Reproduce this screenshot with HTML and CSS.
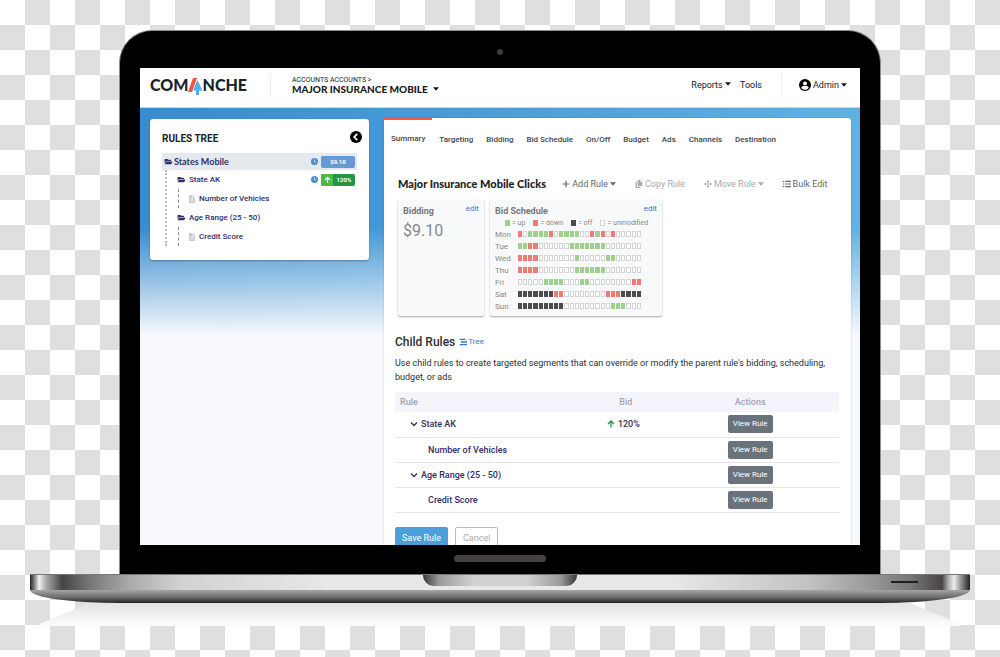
FILE: index.html
```html
<!DOCTYPE html>
<html lang="en">
<head>
<meta charset="utf-8">
<title>Comanche</title>
<link rel="stylesheet" href="styles.css">
</head>
<body>
<svg class="defs" width="0" height="0" aria-hidden="true">
  <symbol id="folder" viewBox="0 0 576 512"><path d="M572 294 500 417c-14 25-41 39-69 39H45c-18 0-30-20-20-36l71-124c14-24 41-40 70-40h385c19 0 31 21 21 38zM152 224h328v-48c0-26-22-48-48-48H272l-64-64H48C22 64 0 86 0 112v278l69-118c17-30 49-48 83-48z"/></symbol>
  <symbol id="file" viewBox="0 0 384 512"><path fill-rule="evenodd" d="M224 0H24C11 0 0 11 0 24v464c0 13 11 24 24 24h336c13 0 24-11 24-24V160H224zM90 230h204v32H90zm0 70h204v32H90zm0 70h204v32H90zM256 0v128h128z"/></symbol>
  <symbol id="clock" viewBox="0 0 16 16"><circle cx="8" cy="8" r="8"/><path d="M8 3.5V8.5l3 1.5" fill="none" stroke="#fff" stroke-width="1.8"/></symbol>
  <symbol id="up" viewBox="0 0 16 16"><path d="M8 15V2.500M2 8l6-6 6 6" fill="none" stroke="currentColor" stroke-width="2.6"/></symbol>
  <symbol id="chev" viewBox="0 0 16 16"><path d="M2 5l6 6 6-6" fill="none" stroke="currentColor" stroke-width="2.6"/></symbol>
  <symbol id="caret" viewBox="0 0 10 6"><path d="M0 0h10L5 6z"/></symbol>
</svg>
<main class="stage">
  <div class="lid">
    <i class="camera"></i>
    <div class="screen">
      <header class="topbar">
        <div class="logo"><span>COM</span><svg viewBox="0 0 16 18"><path fill="#f0553f" d="M5 0h4L4 14H0z"/><path fill="#55aee6" d="M9.500 2 14.500 12.500H11V17H8v-4.500H5z"/></svg><span>NCHE</span></div>
        <div class="account">
          <a href="#" class="crumb">ACCOUNTS ACCOUNTS &gt;</a>
          <button class="picker">MAJOR INSURANCE MOBILE <svg class="caret"><use href="#caret"/></svg></button>
        </div>
        <nav class="topnav">
          <button>Reports <svg class="caret"><use href="#caret"/></svg></button>
          <a href="#">Tools</a>
        </nav>
        <button class="admin"><svg class="user" viewBox="0 0 24 24"><circle cx="12" cy="12" r="12"/><circle cx="12" cy="9" r="4" fill="#fff"/><path fill="#fff" d="M4.500 18c.5-4 4-4 7.500-4s7 0 7.500 4c-2 2.500-4.500 3.500-7.500 3.500S6.500 20.500 4.500 18z"/></svg>Admin <svg class="caret"><use href="#caret"/></svg></button>
      </header>
      <div class="content">
        <aside class="tree">
          <div class="tree-head"><h2>RULES TREE</h2>
            <button class="collapse" aria-label="Collapse"><svg viewBox="0 0 12 12"><circle cx="6" cy="6" r="6"/><path d="M7.300 2.800 4.200 6l3.100 3.200" fill="none" stroke="#fff" stroke-width="1.700"/></svg></button></div>
          <div class="node root"><svg class="folder"><use href="#folder"/></svg><a href="#">States Mobile</a><svg class="clock"><use href="#clock"/></svg><span class="badge">$9.10</span></div>
          <ul class="branch">
            <li><div class="node"><svg class="folder"><use href="#folder"/></svg><a href="#">State AK</a><svg class="clock"><use href="#clock"/></svg><span class="badge green"><b><svg><use href="#up"/></svg></b><em>120%</em></span></div>
              <ul class="leaf"><li class="node"><svg class="file"><use href="#file"/></svg><a href="#">Number of Vehicles</a></li></ul></li>
            <li><div class="node"><svg class="folder"><use href="#folder"/></svg><a href="#">Age Range (25 - 50)</a></div>
              <ul class="leaf"><li class="node"><svg class="file"><use href="#file"/></svg><a href="#">Credit Score</a></li></ul></li>
          </ul>
        </aside>
        <section class="panel">
          <nav class="tabs"><a href="#" class="active">Summary</a><a href="#">Targeting</a><a href="#">Bidding</a><a href="#">Bid Schedule</a><a href="#">On/Off</a><a href="#">Budget</a><a href="#">Ads</a><a href="#">Channels</a><a href="#">Destination</a></nav>
          <div class="toolbar">
            <h1>Major Insurance Mobile Clicks</h1>
            <button><svg class="tool" viewBox="0 0 12 12"><path d="M6 1v10M1 6h10" stroke="currentColor" stroke-width="1.800"/></svg>Add Rule <svg class="caret"><use href="#caret"/></svg></button>
            <button class="dim"><svg class="tool" viewBox="0 0 12 12"><path fill="currentColor" d="M4 0h4v3h3v6H4zM9 0l2 2H9zM1 3h2v7h5v2H1z"/></svg>Copy Rule</button>
            <button class="dim"><svg class="tool" viewBox="0 0 12 12"><path d="M6 1v10M1 6h10" stroke="currentColor" stroke-width="1.200"/><path fill="currentColor" d="M6 0l2.200 2.800H3.800zM6 12l2.200-2.800H3.800zM0 6l2.800-2.200v4.400zM12 6 9.200 3.800v4.400z"/></svg>Move Rule <svg class="caret"><use href="#caret"/></svg></button>
            <button><svg class="tool" viewBox="0 0 12 12"><path d="M0 2h2m1.500 0H12M0 6h2m1.500 0H12M0 10h2m1.500 0H12" stroke="currentColor" stroke-width="1.700"/></svg>Bulk Edit</button>
          </div>
          <div class="cards">
            <article class="card bidding"><header><h3>Bidding</h3><a href="#">edit</a></header><p>$9.10</p></article>
            <article class="card schedule"><header><h3>Bid Schedule</h3><a href="#">edit</a></header>
              <div class="legend"><span><i class="g"></i>= up</span><span><i class="r"></i>= down</span><span><i class="k"></i>= off</span><span><i></i>= unmodified</span></div>
              <div class="week" id="week"></div></article>
          </div>
          <div class="child-head"><h2>Child Rules</h2><a href="#"><svg viewBox="0 0 12 12"><path d="M1 2h9M3 6h9M1 10h11" stroke="currentColor" stroke-width="2"/></svg>Tree</a></div>
          <p class="intro">Use child rules to create targeted segments that can override or modify the parent rule's bidding, scheduling, budget, or ads</p>
          <table class="rules">
            <thead><tr><th class="rule">Rule</th><th class="bid">Bid</th><th class="act">Actions</th></tr></thead>
            <tbody>
              <tr><td class="rule parent"><svg><use href="#chev"/></svg>State AK</td><td class="bid"><svg><use href="#up"/></svg>120%</td><td class="act"><button>View Rule</button></td></tr>
              <tr><td class="rule child">Number of Vehicles</td><td></td><td class="act"><button>View Rule</button></td></tr>
              <tr><td class="rule parent"><svg><use href="#chev"/></svg>Age Range (25 - 50)</td><td></td><td class="act"><button>View Rule</button></td></tr>
              <tr><td class="rule child">Credit Score</td><td></td><td class="act"><button>View Rule</button></td></tr>
            </tbody>
          </table>
          <div class="actions"><button class="save">Save Rule</button><button class="cancel">Cancel</button></div>
        </section>
      </div>
    </div>
    <i class="chin"></i>
  </div>
  <div class="base"><i class="notch"></i><i class="slot"></i></div>
  <div class="underside"></div>
  <div class="shadow"></div>
</main>
<script src="script.js"></script>
</body>
</html>
```

FILE: styles.css
```css
* { box-sizing: border-box; margin: 0; padding: 0; }
body {
  font-family: Roboto, "Liberation Sans", sans-serif;
  font-size: 9px;
  color: #2b2e33;
  background: repeating-conic-gradient(#dfdfdf 0 25%, #fff 0 50%) 0 0 / 50px 50px;
}
.defs { position: absolute; }
a { color: inherit; text-decoration: none; }
button { font: inherit; color: inherit; background: none; border: 0; white-space: nowrap; }
ul { list-style: none; }
i, em { font-style: normal; }
svg { flex: none; display: block; }
.caret { display: inline-block; width: 6px; height: 4px; vertical-align: 2px; fill: currentColor; }

/* laptop */
.stage { height: 100vh; min-height: 400px; padding: 30px 3% 31px; display: flex; flex-direction: column; overflow: hidden; }
.lid {
  flex: 1; min-height: 0; margin: 0 89px; padding: 0 20px; display: flex; flex-direction: column; align-items: center;
  background: #000; border: 1px solid #8d8d8d; border-bottom: 0; border-radius: 33px 33px 0 0;
}
.camera { flex: none; width: 6px; height: 6px; margin: 18px 0 13px; border-radius: 50%; background: #3d3a3c; }
.chin { flex: none; width: 92px; height: 7px; margin: 10px 0 12px; border-radius: 4px; background: #454143; }
.screen { flex: 1; min-height: 0; width: 100%; overflow: hidden; display: flex; flex-direction: column; background: #f8f9fc; }
.base {
  flex: none; height: 16px; display: flex; justify-content: center; position: relative; border-top: 1px solid #777;
  background: linear-gradient(90deg, #222 0, #777 4px, #f2f2f2 9px, #aaa 16px, #474345 32px, #777 60px, #aaa 100px, #d0d2d2 150px, #e8e8e8 300px, #e8e8e8 calc(100% - 300px), #c2c2c2 calc(100% - 160px), #999 calc(100% - 100px), #777 calc(100% - 60px), #484446 calc(100% - 28px), #aaa calc(100% - 22px), #eee calc(100% - 16px), #777 calc(100% - 7px), #222 100%);
}
.notch { width: 154px; height: 11px; border-radius: 0 0 14px 14px; background: linear-gradient(90deg, #3a3a3a, #999 16px, #d0d2d2 50px, #d0d2d2 104px, #999 138px, #3a3a3a); }
.slot { position: absolute; right: 52px; top: 6px; width: 27px; height: 2px; background: #1d1f22; }
.underside { flex: none; height: 13px; background: linear-gradient(#a5a5a5, #666 60%, #231f20); border-radius: 0 0 90px 90px / 0 0 13px 13px; }
.shadow { flex: none; height: 23px; margin: 0 10px; background: linear-gradient(#e2e2e2, #fdfdfd); clip-path: polygon(50px 0, calc(100% - 50px) 0, 100% 90%, 100% 100%, 0 100%, 0 90%); }

/* top bar */
.topbar { flex: none; height: 40px; padding: 0 13px 0 10px; display: flex; align-items: center; background: #fff; border-bottom: 1px solid #c3d9ea; color: #17191c; }
.logo { display: flex; align-items: center; height: 24px; padding-right: 23px; margin-bottom: 5px; border-right: 1px solid #eee; font: 900 16px/20px Lato, sans-serif; color: #1a222b; }
.logo svg { width: 16px; height: 18px; margin: 3px -1px 0 -1px; }
.account { margin: 0 auto 5px 21px; display: flex; flex-direction: column; align-items: flex-start; }
.crumb { font-size: 7px; line-height: 8px; }
.picker { font: 900 10px/11px Lato, sans-serif; }
.picker .caret { margin-left: 3px; }
.topnav { display: flex; gap: 9px; padding-right: 19px; height: 24px; align-items: center; margin-bottom: 5px; border-right: 1px solid #eee; }
.admin { display: flex; align-items: center; gap: 2px; margin: 0 0 5px 17px; }
.user { width: 12px; height: 12px; }

.content {
  flex: 1; min-height: 0; display: flex; align-items: flex-start; gap: 15px; padding: 10px 9px 0 10px;
  background:
    linear-gradient(transparent 120px, #f8f9fc 228px) no-repeat,
    linear-gradient(90deg, #378ccf, #5db2e5) 0 0 / 100% 228px no-repeat;
}

/* rules tree */
.tree { flex: 0 0 219px; margin-top: 1px; padding: 12px 12px 14px; background: #fff; border-radius: 3px; box-shadow: 0 1px 2px rgba(0,0,0,.3); color: #302d6b; font-weight: 500; font-size: 8px; }
.tree-head { display: flex; justify-content: space-between; height: 22px; align-items: flex-start; margin-right: -5px; }
.tree-head h2 { font-size: 10px; line-height: 16px; font-weight: 700; color: #222; }
.collapse svg { width: 12px; height: 12px; }
.node { height: 19px; display: flex; align-items: center; }
.node a { flex: 1; }
.root { height: 17px; padding: 0 2px; background: #e4e9ee; font: 700 9px/17px Lato, sans-serif; }
.folder { width: 9px; height: 7px; margin-right: 1px; fill: #302d6b; }
.file { width: 6px; height: 8px; margin-right: 4px; fill: #ccc; }
.clock { width: 7px; height: 7px; margin-right: 3px; fill: #4a8ad0; }
.badge { width: 34px; height: 12px; display: flex; justify-content: center; overflow: hidden; border-radius: 2px; background: #6699d4; color: #fff; font: 700 6px/12px Roboto, sans-serif; }
.green { background: #23963f; }
.green b { width: 12px; display: grid; place-items: center; background: #4cb848; }
.green svg { width: 7px; height: 8px; }
.green em { flex: 1; text-align: center; }
.branch { margin: 2px 0 0 3px; border-left: 2px dotted #bbb; padding-left: 10px; }
.branch > li:first-child { margin-top: -2px; }
.branch .folder { margin-right: 3px; }
.branch > li > .node { padding-right: 2px; }
.leaf { margin-left: 1px; border-left: 1px dashed #888; padding-left: 10px; }

/* main panel */
.panel { flex: 1; min-width: 0; background: #fff; border-radius: 0 3px 0 0; padding-bottom: 20px; box-shadow: 0 0 2px rgba(0,0,0,.2); }
.tabs { display: flex; font-size: 8px; font-weight: 500; line-height: 10px; color: #444; }
.tabs a { padding: 15px 6px 0 7px; border-top: 2px solid transparent; }
.tabs a.active { border-color: #ef5b4c; padding: 14px 7px 0; }
.toolbar { display: flex; align-items: center; gap: 19px; margin: 33px 14px 10px; line-height: 12px; color: #666; }
.toolbar h1 { font: 900 11px/12px Lato, sans-serif; color: #222; margin-right: -3px; white-space: nowrap; }
.toolbar button { display: flex; align-items: center; gap: 2px; }
.toolbar .dim { color: #aaa; }
.tool { width: 8px; height: 8px; }
.cards { display: flex; gap: 6px; margin: 0 14px; height: 116px; }
.card { padding: 4px 5px; background: #f8f9fb; border-radius: 2px; box-shadow: 0 1px 2px rgba(0,0,0,.35); color: #888; }
.card header { display: flex; justify-content: space-between; }
.card h3 { font-size: 9px; font-weight: 700; line-height: 14px; color: #777; }
.card header a { font-size: 8px; line-height: 9px; color: #3579cf; }
.bidding { width: 86px; }
.bidding p { font-size: 16px; line-height: 26px; }
.schedule { width: 172px; }
.legend { display: flex; gap: 8px; margin-left: 10px; font-size: 7px; line-height: 10px; white-space: nowrap; }
.legend span { display: flex; align-items: center; gap: 2px; }
.legend i, .day i { height: 6px; border: 1px solid #d5d5d5; background: #fff; }
.legend i { width: 5px; }
.legend .g, .day .g { background: #9fd08c; border-color: #9fd08c; }
.legend .r, .day .r { background: #ee7a72; border-color: #ee7a72; }
.legend .k, .day .k { background: #4c4c4e; border-color: #4c4c4e; }
.day { display: flex; align-items: center; height: 12px; font-size: 8px; }
.day span { width: 23px; }
.cells { width: 123px; display: grid; grid-template-columns: repeat(24, 1fr); gap: 1px; }
.child-head { display: flex; align-items: center; gap: 4px; margin: 19px 11px 7px; line-height: 14px; }
.child-head h2 { font-size: 12px; font-weight: 500; }
.child-head a { display: flex; align-items: center; gap: 1px; color: #3579cf; font-size: 8px; }
.child-head svg { width: 8px; height: 8px; }
.intro { margin: 0 11px 8px; line-height: 14px; }
.rules { width: calc(100% - 23px); margin: 0 12px 0 11px; border-collapse: collapse; table-layout: fixed; }
.rules th { height: 20px; background: #f4f5fb; color: #a3a3b5; font-weight: 500; text-align: center; }
.rules td { height: 25px; border-bottom: 1px solid #e6e6e9; color: #302d6b; font-weight: 500; line-height: 12px; }
.rules .rule { width: 44%; text-align: left; padding-left: 5px; }
.rules .bid { width: 16%; text-align: center; }
.rules td.bid { padding-right: 5px; }
.rules .act { width: 40%; text-align: center; }
.rules .parent { padding-left: 15px; }
.rules .child { padding-left: 33px; }
.rules td svg { display: inline-block; width: 8px; height: 8px; vertical-align: -1px; margin-right: 3px; }
.rules .bid svg { color: #1f9a3c; }
.rules button { display: block; width: 45px; height: 18px; margin: 0 auto; border-radius: 2px; background: #6a737b; color: #fff; font-size: 8px; font-weight: 400; }
.actions { display: flex; gap: 7px; margin: 14px 11px 0; }
.actions button { height: 22px; padding: 0 7px; border-radius: 2px; font-size: 9px; }
.save { background: #4ba0dc; color: #fff; }
.actions .cancel { border: 1px solid #bbb; color: #aaa; }
```

FILE: script.js
```js
// g = up, r = down, k = off, - = unmodified; one character per hour
const schedule = {
  Mon: "r-ggggr-gggg--rgr-r-----",
  Tue: "ggrr------ggggggg-------",
  Wed: "rrrr-------g-----gg-----",
  Thu: "rrrr-------gggggg-------",
  Fri: "-----gggg---gg--------rr",
  Sat: "kkkkkkkrr--------rrrkkkk",
  Sun: "kkkkkkkkk---------ggg---"
};
document.getElementById("week").innerHTML = Object.entries(schedule).map(([day, hours]) =>
  `<div class="day"><span>${day}</span><div class="cells">${[...hours].map(h => `<i class="${h === "-" ? "" : h}"></i>`).join("")}</div></div>`
).join("");
```
